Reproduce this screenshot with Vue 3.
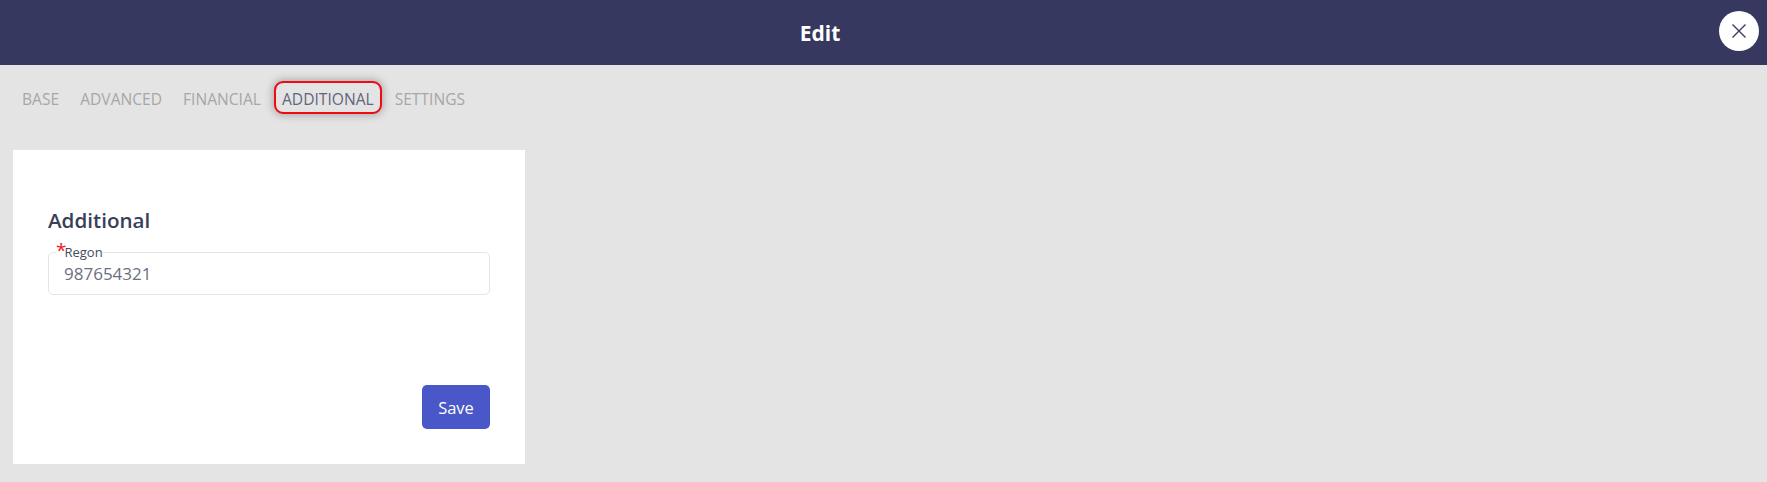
<script setup>
const tabs = ["BASE", "ADVANCED", "FINANCIAL", "ADDITIONAL", "SETTINGS"];
const activeTab = "ADDITIONAL";
</script>

<template>
  <div class="page">
    <header class="top-bar">
      <h1>Edit</h1>
      <button class="close-btn" aria-label="Close">
        <svg width="16" height="16" viewBox="0 0 16 16">
          <path d="M1.5 1.5 L14.5 14.5 M14.5 1.5 L1.5 14.5" stroke="#3a3b60" stroke-width="1.4" fill="none" />
        </svg>
      </button>
    </header>

    <nav class="tabs">
      <span
        v-for="tab in tabs"
        :key="tab"
        class="tab"
        :class="{ active: tab === activeTab }"
      >{{ tab }}</span>
    </nav>

    <section class="card">
      <h2>Additional</h2>
      <fieldset class="field">
        <legend><span class="star">*</span>Regon</legend>
        <div class="value">987654321</div>
      </fieldset>
      <div class="actions">
        <button class="save-btn">Save</button>
      </div>
    </section>
  </div>
</template>

<style>
html,
body {
  margin: 0;
  background: #e4e4e4;
}
</style>

<style scoped>
.page {
  position: relative;
  height: 482px;
  overflow: hidden;
  background: #e4e4e4;
  font-family: "Open Sans", "Noto Sans", sans-serif;
}

.top-bar {
  height: 65px;
  padding-right: 127px;
  background: #363860;
  display: flex;
  align-items: center;
  justify-content: center;
}

.top-bar h1 {
  margin: 0;
  font-size: 21px;
  font-weight: 700;
  color: #fff;
}

.close-btn {
  position: absolute;
  top: 11px;
  left: 1719px;
  width: 40px;
  height: 40px;
  border: none;
  padding: 0;
  border-radius: 50%;
  background: #fff;
  display: flex;
  align-items: center;
  justify-content: center;
}

.tabs {
  display: flex;
  gap: 9px;
  padding: 18px 0 0 16px;
  height: 29px;
}

.tab {
  padding: 3px 6px 0;
  font-size: 15.6px;
  line-height: 26px;
  color: #a8a6a6;
}

.tab.active {
  color: #62657c;
  border-radius: 7px;
  outline: 2px solid #f00a14;
  box-shadow: 0 0 8px 3px rgba(0, 0, 0, 0.28);
}

.card {
  margin: 38px 0 0 13px;
  width: 512px;
  height: 314px;
  box-sizing: border-box;
  padding: 55px 35px 35px;
  background: #fff;
  display: flex;
  flex-direction: column;
}

.card h2 {
  margin: 0;
  font-size: 20.6px;
  line-height: 30px;
  font-weight: 600;
  color: #374056;
}

.field {
  margin: 10px 0 0;
  padding: 0 15px;
  height: 50px;
  box-sizing: border-box;
  border: 1px solid #e3e5e9;
  border-radius: 5px;
}

.field legend {
  padding: 0;
  margin-left: -8px;
  font-size: 13px;
  line-height: 13px;
  color: #454b5e;
}

.star {
  color: #f0141e;
  font-size: 19px;
  line-height: 10px;
  margin-right: -2px;
}

.value {
  font-size: 17px;
  line-height: 24px;
  color: #6b7080;
  margin-top: 3px;
}

.actions {
  margin-top: auto;
  display: flex;
  justify-content: flex-end;
}

.save-btn {
  width: 68px;
  height: 44px;
  border: none;
  border-radius: 5px;
  background: #4a57c8;
  color: #fff;
  font-family: inherit;
  font-size: 16.5px;
}
</style>
